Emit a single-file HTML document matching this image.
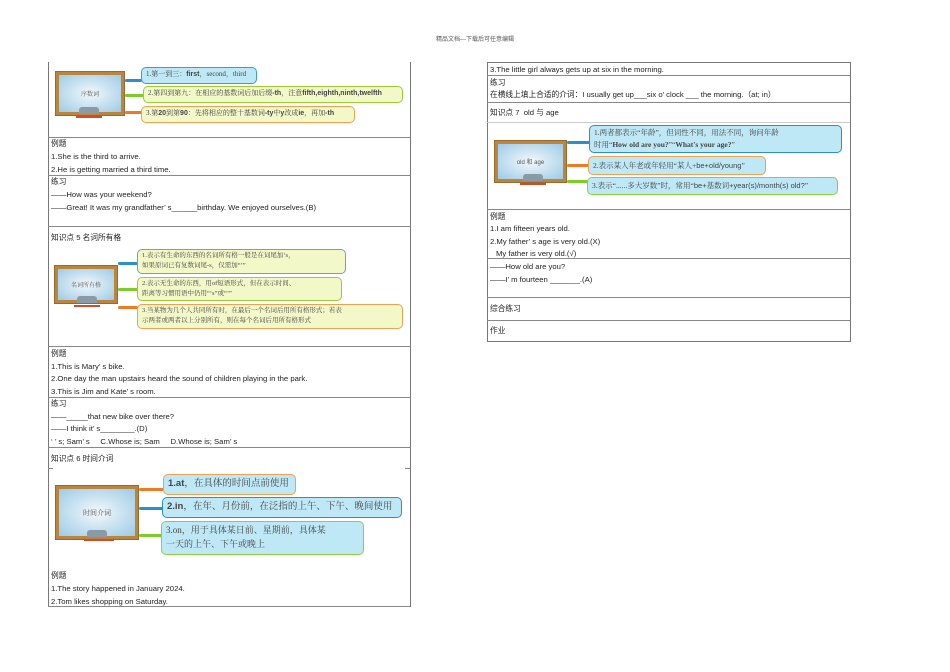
<!DOCTYPE html>
<html><head><meta charset="utf-8"><style>
body{margin:0;width:950px;height:672px;background:#fff;position:relative;font-family:"Liberation Sans","Noto Sans CJK SC",sans-serif;color:#222;overflow:hidden}
.a{position:absolute;white-space:nowrap}
.t{font-size:7.7px;line-height:9px}
.tb{position:absolute;border:1px solid #777}
.hl{position:absolute;height:1px;background:#888}
.bd{position:absolute;background:#b9853f;border:1px solid #9a6a2a;box-sizing:border-box;padding:3px}
.bd div{width:100%;height:100%;background:radial-gradient(#f4f8fb,#9ccbe6);font-size:6px;color:#555;display:flex;align-items:center;justify-content:center;font-family:"Liberation Serif","Noto Serif CJK SC",serif}
.bx{position:absolute;border:1.5px solid;border-radius:5px;box-sizing:border-box;font-family:"Liberation Serif","Noto Serif CJK SC",serif;color:#444;padding:1px 4px;white-space:nowrap}
.y{background:#f2f8c8}.c{background:#bfe8f6}
.book{position:absolute;width:26px;height:9px;border-bottom:2px solid #d24a2a}
.book:before{content:"";position:absolute;left:3px;top:0;width:20px;height:7px;background:#8a9aa6;border-radius:3px 3px 0 0}
.ln{position:absolute;height:3px;border-radius:2px}
</style></head><body>
<div class="a" style="left:0;width:950px;text-align:center;top:34px;font-size:6px;color:#555">精品文档---下载后可任意编辑</div>

<!-- left table -->
<div class="tb" style="left:48px;top:62px;width:361px;height:544px;border-top:none"></div>
<div class="hl" style="left:48px;top:137px;width:362px"></div>
<div class="hl" style="left:48px;top:175px;width:362px"></div>
<div class="hl" style="left:48px;top:226px;width:362px"></div>
<div class="hl" style="left:48px;top:346px;width:362px"></div>
<div class="hl" style="left:48px;top:397px;width:362px"></div>
<div class="hl" style="left:48px;top:447px;width:362px"></div>
<div class="hl" style="left:48px;top:468px;width:5px"></div>
<div class="hl" style="left:405px;top:468px;width:5px"></div>
<div class="hl" style="left:48px;top:606px;width:362px"></div>

<!-- mindmap 1 -->
<div class="bd" style="left:55px;top:71px;width:70px;height:45px"><div>序数词</div></div>
<div class="book" style="left:76px;top:107px"></div>
<div class="ln" style="left:125px;top:79px;width:17px;background:#2b8fcf"></div>
<div class="ln" style="left:125px;top:94px;width:19px;background:#7ccc2a"></div>
<div class="ln" style="left:125px;top:111px;width:17px;background:#f07a22"></div>
<div class="bx c" style="left:141px;top:67px;width:116px;height:17px;border-color:#3a9fd0;font-size:7px">1.第一到三：<b style="font-family:Liberation Sans">first</b>，second，third</div>
<div class="bx y" style="left:143px;top:86px;width:260px;height:17px;border-color:#9acd32;font-size:7px">2.第四到第九：在相应的基数词后加后缀<b style="font-family:Liberation Sans">-th</b>，注意<b style="font-family:Liberation Sans">fifth,eighth,ninth,twelfth</b></div>
<div class="bx y" style="left:141px;top:106px;width:214px;height:17px;border-color:#f0a050;font-size:7px">3.第<b style="font-family:Liberation Sans">20</b>到第<b style="font-family:Liberation Sans">90</b>：先将相应的整十基数词<b style="font-family:Liberation Sans">-ty</b>中<b style="font-family:Liberation Sans">y</b>改成<b style="font-family:Liberation Sans">ie</b>，再加<b style="font-family:Liberation Sans">-th</b></div>

<div class="a t" style="left:51px;top:139px">例题</div>
<div class="a t" style="left:51px;top:152px">1.She is the third to arrive.</div>
<div class="a t" style="left:51px;top:165px">2.He is getting married a third time.</div>
<div class="a t" style="left:51px;top:177px">练习</div>
<div class="a t" style="left:51px;top:190px">——How was your weekend?</div>
<div class="a t" style="left:51px;top:203px">——Great! It was my grandfather’ s______birthday. We enjoyed ourselves.(B)</div>
<div class="a t" style="left:51px;top:233px">知识点 5 名词所有格</div>

<!-- mindmap 2 -->
<div class="bd" style="left:54px;top:265px;width:64px;height:39px"><div>名词所有格</div></div>
<div class="book" style="left:74px;top:296px"></div>
<div class="ln" style="left:118px;top:262px;width:20px;background:#2b8fcf"></div>
<div class="ln" style="left:118px;top:288px;width:20px;background:#7ccc2a"></div>
<div class="ln" style="left:118px;top:306px;width:20px;background:#f07a22"></div>
<div class="bx y" style="left:137px;top:249px;width:209px;height:25px;border-color:#5aaad0;font-size:6.5px;line-height:10px">1.表示有生命的东西的名词所有格一般是在词尾加‘s，<br>如果原词已有复数词尾-s，仅需加“’”</div>
<div class="bx y" style="left:137px;top:277px;width:205px;height:24px;border-color:#9acd32;font-size:6.5px;line-height:10px">2.表示无生命的东西，用of短语形式，但在表示时间、<br>距离等习惯用语中仍用“‘s”或“’”</div>
<div class="bx y" style="left:137px;top:304px;width:266px;height:25px;border-color:#f0a050;font-size:6.5px;line-height:10px">3.当某物为几个人共同所有时，在最后一个名词后用所有格形式；若表<br>示两者或两者以上分别所有，则在每个名词后用所有格形式</div>

<div class="a t" style="left:51px;top:349px">例题</div>
<div class="a t" style="left:51px;top:362px">1.This is Mary’ s bike.</div>
<div class="a t" style="left:51px;top:374px">2.One day the man upstairs heard the sound of children playing in the park.</div>
<div class="a t" style="left:51px;top:387px">3.This is Jim and Kate’ s room.</div>
<div class="a t" style="left:51px;top:399px">练习</div>
<div class="a t" style="left:51px;top:412px">——_____that new bike over there?</div>
<div class="a t" style="left:51px;top:424px">——I think it’ s________.(D)</div>
<div class="a t" style="left:51px;top:437px">‘ ’ s; Sam’ s &nbsp;&nbsp;&nbsp;&nbsp;C.Whose is; Sam &nbsp;&nbsp;&nbsp;&nbsp;D.Whose is; Sam’ s</div>
<div class="a t" style="left:51px;top:454px">知识点 6 时间介词</div>

<!-- mindmap 3 -->
<div class="bd" style="left:55px;top:485px;width:84px;height:55px"><div style="font-size:7px">时间介词</div></div>
<div class="book" style="left:84px;top:530px;width:30px"></div>
<div class="ln" style="left:139px;top:488px;width:25px;background:#f07a22"></div>
<div class="ln" style="left:139px;top:507px;width:24px;background:#2b8fcf"></div>
<div class="ln" style="left:139px;top:534px;width:23px;background:#7ccc2a"></div>
<div class="bx c" style="left:163px;top:474px;width:133px;height:21px;border-color:#f0a050;font-size:9.5px;line-height:16px"><b style="font-family:Liberation Sans">1.at</b>，在具体的时间点前使用</div>
<div class="bx c" style="left:162px;top:497px;width:240px;height:21px;border-color:#2b8fcf;font-size:9.5px;line-height:16px"><b style="font-family:Liberation Sans">2.in</b>，在年、月份前，在泛指的上午、下午、晚间使用</div>
<div class="bx c" style="left:161px;top:521px;width:203px;height:34px;border-color:#8cd040;font-size:9px;line-height:14px">3.on，用于具体某日前、星期前，具体某<br>一天的上午、下午或晚上</div>

<div class="a t" style="left:51px;top:571px">例题</div>
<div class="a t" style="left:51px;top:584px">1.The story happened in January 2024.</div>
<div class="a t" style="left:51px;top:597px">2.Tom likes shopping on Saturday.</div>

<!-- right table -->
<div class="tb" style="left:487px;top:62px;width:362px;height:278px"></div>
<div class="hl" style="left:487px;top:75px;width:363px"></div>
<div class="hl" style="left:487px;top:102px;width:363px"></div>
<div class="hl" style="left:487px;top:122px;width:363px;background:#ccc"></div>
<div class="hl" style="left:487px;top:209px;width:363px"></div>
<div class="hl" style="left:487px;top:258px;width:363px"></div>
<div class="hl" style="left:487px;top:297px;width:363px"></div>
<div class="hl" style="left:487px;top:320px;width:363px"></div>

<div class="a t" style="left:490px;top:65px">3.The little girl always gets up at six in the morning.</div>
<div class="a t" style="left:490px;top:78px">练习</div>
<div class="a t" style="left:490px;top:90px">在横线上填上合适的介词：I usually get up___six o’ clock ___ the morning.（at; in）</div>
<div class="a t" style="left:490px;top:108px">知识点 7 &nbsp;old 与 age</div>

<div class="bd" style="left:494px;top:140px;width:73px;height:43px"><div style="font-family:Liberation Sans">old 和 age</div></div>
<div class="book" style="left:520px;top:174px"></div>
<div class="ln" style="left:567px;top:141px;width:23px;background:#2b8fcf"></div>
<div class="ln" style="left:567px;top:164px;width:22px;background:#f07a22"></div>
<div class="ln" style="left:567px;top:180px;width:21px;background:#7ccc2a"></div>
<div class="bx c" style="left:589px;top:125px;width:253px;height:28px;border-color:#2b8fcf;font-size:7.5px;line-height:12px">1.两者都表示“年龄”，但词性不同，用法不同，询问年龄<br>时用“<b>How old are you?</b>”“<b>What's your age?</b>”</div>
<div class="bx c" style="left:588px;top:156px;width:178px;height:19px;border-color:#f0a050;font-size:7.5px;line-height:15px">2.表示某人年老或年轻用“某人+<span style="font-family:Liberation Sans">be+old/young</span>”</div>
<div class="bx c" style="left:587px;top:177px;width:251px;height:18px;border-color:#8cd040;font-size:7.5px;line-height:14px">3.表示“......多大岁数”时，常用“<span style="font-family:Liberation Sans">be+</span>基数词<span style="font-family:Liberation Sans">+year(s)/month(s) old?</span>”</div>

<div class="a t" style="left:490px;top:212px">例题</div>
<div class="a t" style="left:490px;top:224px">1.I am fifteen years old.</div>
<div class="a t" style="left:490px;top:237px">2.My father’ s age is very old.(X)</div>
<div class="a t" style="left:496px;top:249px">My father is very old.(√)</div>
<div class="a t" style="left:490px;top:262px">——How old are you?</div>
<div class="a t" style="left:490px;top:275px">——I’ m fourteen _______.(A)</div>
<div class="a t" style="left:490px;top:304px">综合练习</div>
<div class="a t" style="left:490px;top:326px">作业</div>
</body></html>
